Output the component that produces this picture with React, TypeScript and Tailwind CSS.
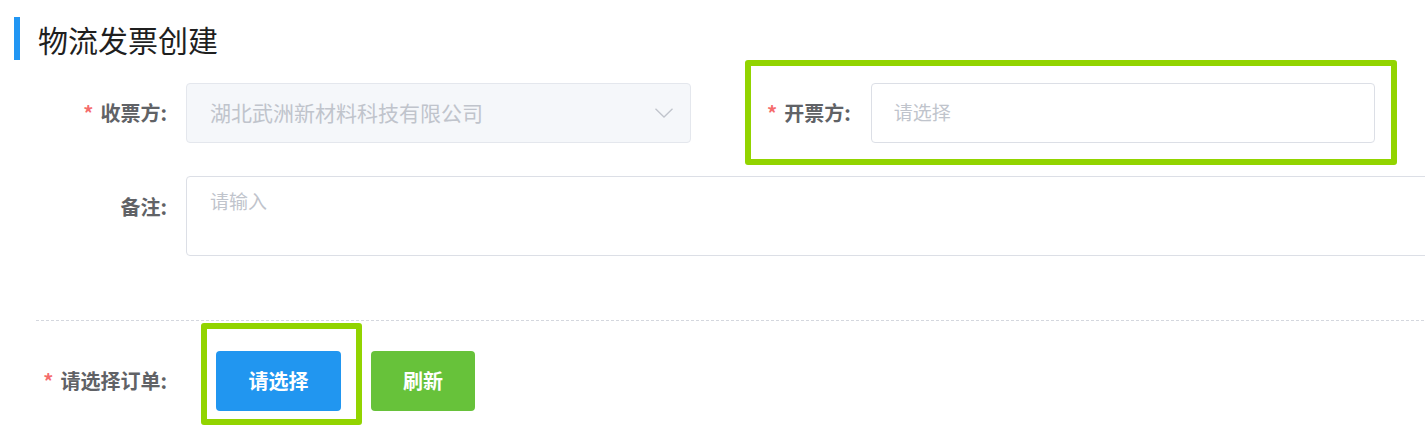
const font = { fontFamily: '"Noto Sans CJK SC", "Noto Sans", sans-serif' };

function Label({ text, required }: { text: string; required?: boolean }) {
  return (
    <div className="flex items-center justify-end font-bold text-[20px] text-[#606266]">
      {required && <span className="text-[#f56c6c] mr-[7px]">*</span>}
      <span>{text}</span>
    </div>
  );
}

export default function App() {
  return (
    <div className="w-[1425px] h-[431px] bg-white overflow-hidden" style={font}>
      {/* header */}
      <div className="flex items-center pt-[17px] pl-[14px]">
        <div className="w-[6px] h-[43px] bg-[#2196f3]" />
        <h1 className="ml-[18px] text-[30px] leading-none text-[#1f1f1f] font-normal">物流发票创建</h1>
      </div>

      {/* row 1 */}
      <div className="flex items-center">
        <div className="w-[186px] shrink-0 pr-[19px]">
          <Label text="收票方:" required />
        </div>
        <div className="w-[505px] shrink-0 h-[60px] flex items-center justify-between rounded-[4px] border border-[#e4e7ed] bg-[#f5f7fa] pl-[23px] pr-[17px] text-[21px] text-[#c0c4cc]">
          <span>湖北武洲新材料科技有限公司</span>
          <svg width="18" height="10" viewBox="0 0 18 10" fill="none">
            <polyline points="0.5,0.8 9,9 17.5,0.8" stroke="#c0c4cc" strokeWidth="1.3" />
          </svg>
        </div>
        <div className="ml-[54px] w-[652px] shrink-0 h-[105px] flex items-center border-[6px] border-[#92d400] rounded-[3px] pl-[16px] pr-[16px]">
          <Label text="开票方:" required />
          <div className="ml-[20px] flex-1 h-[60px] flex items-center rounded-[4px] border border-[#dcdfe6] pl-[22px] text-[19px] text-[#c0c4cc]">
            请选择
          </div>
        </div>
      </div>

      {/* row 2 */}
      <div className="flex items-start mt-[11px]">
        <div className="w-[186px] shrink-0 pr-[19px] pt-[16px]">
          <Label text="备注:" />
        </div>
        <div className="w-[1300px] shrink-0 h-[80px] rounded-[4px] border border-[#dcdfe6] pl-[23px] pt-[10px] text-[19px] text-[#c0c4cc]">
          请输入
        </div>
      </div>

      {/* divider */}
      <div className="ml-[36px] mt-[64px] h-px bg-[repeating-linear-gradient(90deg,#d4d7de_0_3px,transparent_3px_5px)]" />

      {/* order row */}
      <div className="flex items-center mt-[30px]">
        <div className="w-[186px] shrink-0 pr-[19px]">
          <Label text="请选择订单:" required />
        </div>
        <div className="ml-[30px] relative">
          <div className="absolute -top-[28px] -left-[15px] w-[161px] h-[102px] border-[6px] border-[#92d400] rounded-[3px]" />
          <button className="relative w-[125px] h-[60px] rounded-[4px] bg-[#2196f0] text-white font-bold text-[20px]">
            请选择
          </button>
        </div>
        <button className="ml-[30px] w-[104px] h-[60px] rounded-[4px] bg-[#67c23a] text-white font-bold text-[20px]">
          刷新
        </button>
      </div>
    </div>
  );
}
